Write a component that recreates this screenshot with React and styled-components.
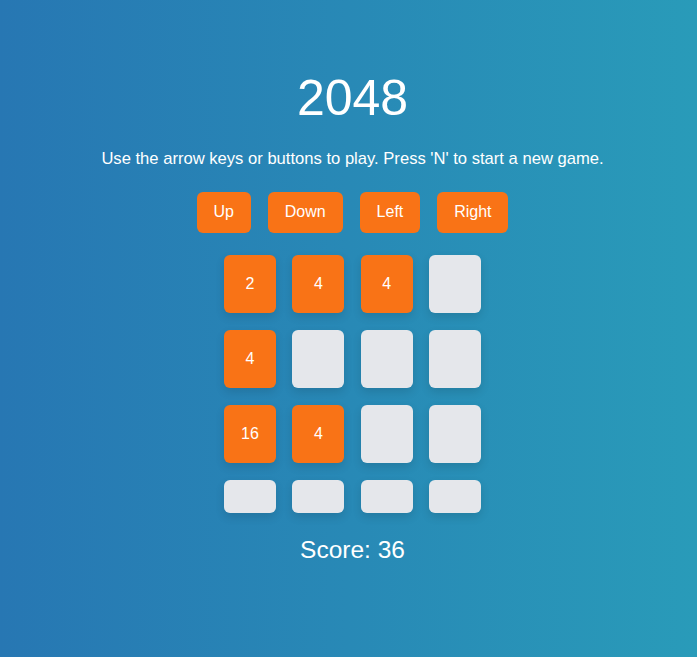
import React from "react";
import styled, { createGlobalStyle } from "styled-components";

const Global = createGlobalStyle`
  html, body {
    margin: 0;
    padding: 0;
    min-height: 100%;
    background: linear-gradient(to right, #2777b3, #299bb9);
    font-family: "Liberation Sans", Arial, sans-serif;
  }
`;

const Page = styled.div`
  min-height: 657px;
  box-sizing: border-box;
  padding: 70px 0 0 8px;
  display: flex;
  flex-direction: column;
  align-items: center;
  color: #ffffff;
`;

const Title = styled.h1`
  margin: 0;
  font-size: 50px;
  font-weight: 400;
  line-height: 57.5px;
`;

const Hint = styled.p`
  margin: 22px 0 0;
  font-size: 16.6px;
  line-height: 18.4px;
`;

const Controls = styled.div`
  display: flex;
  gap: 17.3px;
  margin-top: 23.6px;
`;

const Button = styled.button`
  background: #f97316;
  color: #ffffff;
  border: none;
  border-radius: 6px;
  padding: 11.3px 16.8px;
  font-family: "Liberation Sans", Arial, sans-serif;
  font-size: 16px;
  line-height: 18.4px;
  cursor: pointer;
`;

const Board = styled.div`
  display: grid;
  grid-template-columns: repeat(4, 52px);
  column-gap: 16.33px;
  row-gap: 17px;
  margin-top: 22px;
`;

const Tile = styled.div`
  box-sizing: border-box;
  padding: 16.5px 0;
  border-radius: 6px;
  background: ${(p) => (p.$value ? "#f97316" : "#e5e7eb")};
  color: #ffffff;
  font-size: 16px;
  line-height: 25px;
  text-align: center;
  box-shadow: 0 4px 10px rgba(0, 0, 0, 0.12);
`;

const Score = styled.div`
  margin-top: 23px;
  font-size: 24.5px;
  line-height: 28px;
`;

const grid = [
  [2, 4, 4, 0],
  [4, 0, 0, 0],
  [16, 4, 0, 0],
  [0, 0, 0, 0],
];

export default function App() {
  return (
    <>
      <Global />
      <Page>
        <Title>2048</Title>
        <Hint>Use the arrow keys or buttons to play. Press 'N' to start a new game.</Hint>
        <Controls>
          <Button>Up</Button>
          <Button>Down</Button>
          <Button>Left</Button>
          <Button>Right</Button>
        </Controls>
        <Board>
          {grid.flat().map((v, i) => (
            <Tile key={i} $value={v}>
              {v ? v : null}
            </Tile>
          ))}
        </Board>
        <Score>Score: 36</Score>
      </Page>
    </>
  );
}
